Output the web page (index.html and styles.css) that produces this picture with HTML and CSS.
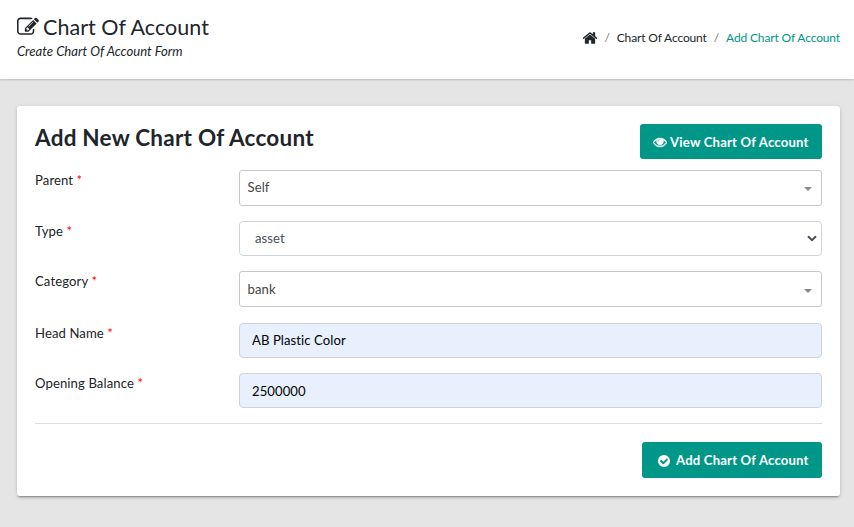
FILE: index.html
```html
<!DOCTYPE html>
<html lang="en">
<head>
<meta charset="utf-8">
<title>Chart Of Account</title>
<link rel="stylesheet" href="styles.css">
</head>
<body>
<header class="app-title">
  <div>
    <h1 class="page-title"><svg class="icon icon-edit" viewBox="0 0 1792 1792"><path d="M888 1184l116-116-152-152-116 116v56h96v96h56zm440-720q-16-16-33 1l-350 350q-17 17-1 33t33-1l350-350q17-17 1-33zm80 594v190q0 119-84.500 203.500t-203.500 84.500h-832q-119 0-203.500-84.500t-84.500-203.500v-832q0-119 84.500-203.500t203.500-84.500h832q63 0 117 25 15 7 18 23 3 17-9 29l-49 49q-14 14-32 8-23-6-45-6h-832q-66 0-113 47t-47 113v832q0 66 47 113t113 47h832q66 0 113-47t47-113v-126q0-13 9-22l64-64q15-15 35-7t20 29zm-96-738l288 288-672 672h-288v-288zm444 132l-92 92-288-288 92-92q28-28 68-28t68 28l152 152q28 28 28 68t-28 68z"/></svg><span>Chart Of Account</span></h1>
    <p class="subtitle">Create Chart Of Account Form</p>
  </div>
  <nav class="breadcrumb">
    <svg class="icon icon-home" viewBox="0 0 1792 1792"><path d="M1472 992v480q0 26-19 45t-45 19h-384v-384h-256v384h-384q-26 0-45-19t-19-45v-480q0-1 .5-3t.5-3l575-474 575 474q1 2 1 6zm223-69l-62 74q-8 9-21 11h-3q-13 0-21-7l-692-577-692 577q-12 8-24 7-13-2-21-11l-62-74q-8-10-7-23.500t11-21.500l719-599q32-26 76-26t76 26l244 204v-195q0-14 9-23t23-9h192q14 0 23 9t9 23v408l219 182q10 8 11 21.500t-7 23.500z"/></svg>
    <span class="sep">/</span>
    <span>Chart Of Account</span>
    <span class="sep">/</span>
    <a class="current">Add Chart Of Account</a>
  </nav>
</header>
<main class="tile">
  <div class="tile-head">
    <h2 class="tile-title">Add New Chart Of Account</h2>
    <a class="btn btn-view"><svg class="icon icon-eye" viewBox="0 0 1792 1792"><path d="M1664 960q-152-236-381-353 61 104 61 225 0 185-131.500 316.500t-316.500 131.500-316.500-131.500-131.500-316.500q0-121 61-225-229 117-381 353 133 205 333.500 326.500t434.500 121.500 434.500-121.500 333.500-326.500zm-720-384q0-20-14-34t-34-14q-125 0-214.500 89.500t-89.500 214.500q0 20 14 34t34 14 34-14 14-34q0-86 61-147t147-61q20 0 34-14t14-34zm848 384q0 34-20 69-140 230-376.500 368.500t-499.500 138.500-499.500-139-376.500-368q-20-35-20-69t20-69q140-229 376.500-368t499.500-139 499.500 139 376.500 368q20 35 20 69z"/></svg><span>View Chart Of Account</span></a>
  </div>
  <form class="form">
    <div class="row">
      <label class="label">Parent <span class="req">*</span></label>
      <div class="control picker picker-first"><span>Self</span><i class="caret"></i></div>
    </div>
    <div class="row">
      <label class="label">Type <span class="req">*</span></label>
      <div class="control select"><span>asset</span><svg class="chevron" viewBox="0 0 10 7"><path d="M1 1.200l4 4 4-4"/></svg></div>
    </div>
    <div class="row">
      <label class="label">Category <span class="req">*</span></label>
      <div class="control picker"><span>bank</span><i class="caret"></i></div>
    </div>
    <div class="row row-input">
      <label class="label">Head Name <span class="req">*</span></label>
      <div class="control filled filled-name">AB Plastic Color</div>
    </div>
    <div class="row">
      <label class="label">Opening Balance <span class="req">*</span></label>
      <div class="control filled">2500000</div>
    </div>
  </form>
  <div class="tile-footer">
    <a class="btn btn-add"><svg class="icon icon-check" viewBox="0 0 1792 1792"><path d="M1412 734q0-28-18-46l-91-90q-19-19-45-19t-45 19l-408 407-226-226q-19-19-45-19t-45 19l-91 90q-18 18-18 46 0 27 18 45l362 362q19 19 45 19 27 0 46-19l543-543q18-18 18-45zm252 162q0 209-103 385.500t-279.500 279.500-385.500 103-385.500-103-279.500-279.500-103-385.500 103-385.500 279.500-279.500 385.500-103 385.500 103 279.500 279.500 103 385.500z"/></svg><span>Add Chart Of Account</span></a>
  </div>
</main>
</body>
</html>
```
FILE: styles.css
```css
* { box-sizing: border-box; }
body {
  margin: 0;
  height: 527px;
  overflow: hidden;
  background: #e5e5e5;
  color: #212529;
  font-family: Lato, "Liberation Sans", sans-serif;
  font-size: 13.125px;
  line-height: 20px;
}
.icon { fill: currentColor; flex: none; }
.app-title {
  display: flex;
  justify-content: space-between;
  height: 79px;
  padding: 14px 14px 0 17px;
  background: #fff;
  box-shadow: 0 1px 2px rgba(0, 0, 0, .18);
}
.page-title {
  display: flex;
  align-items: center;
  gap: 4px;
  margin: 0;
  font-size: 21.500px;
  font-weight: 400;
  letter-spacing: .04px;
  line-height: 25px;
  height: 27px;
  padding-bottom: 1px;
}
.icon-edit { width: 22px; height: 22px; }
.subtitle { margin: 0; font-style: italic; }
.breadcrumb {
  display: flex;
  align-items: center;
  height: 20px;
  margin-top: 14px;
  font-size: 12px;
  letter-spacing: -.14px;
}
.icon-home { width: 16px; height: 16px; margin-right: -1px; }
.sep { margin: 0 7px; color: #6c757d; }
.current { color: #009688; }
.tile {
  width: 823px;
  height: 390px;
  margin: 27px 0 0 17px;
  padding: 18px;
  background: #fff;
  border-radius: 3px;
  box-shadow: 0 2px 2px 0 rgba(0, 0, 0, .14), 0 1px 5px 0 rgba(0, 0, 0, .12), 0 3px 1px -2px rgba(0, 0, 0, .2);
}
.tile-head {
  display: flex;
  justify-content: space-between;
  height: 46px;
}
.tile-title {
  margin: 0;
  font-size: 22.500px;
  font-weight: 700;
  letter-spacing: .24px;
  line-height: 27px;
}
.btn {
  display: flex;
  align-items: center;
  border-radius: 3px;
  background: #009688;
  color: #fff;
  font-weight: 700;
  letter-spacing: .19px;
}
.btn-view { width: 182px; height: 35px; padding-left: 13px; gap: 4px; }
.btn-add { width: 180px; height: 36px; padding-left: 15px; gap: 5px; }
.icon-eye { width: 14px; height: 14px; margin-right: -1px; stroke: currentColor; stroke-width: 50px; }
.icon-check { width: 14px; height: 14px; margin-top: 2px; }
.form { display: grid; gap: 15px; }
.row { display: grid; grid-template-columns: 204px 1fr; }
.row-input { margin-top: 1px; }
.label { letter-spacing: .1px; }
.control {
  display: flex;
  align-items: center;
  justify-content: space-between;
  height: 35px;
  border: 1px solid #ced4da;
  border-radius: 4px;
  color: #495057;
  letter-spacing: .07px;
}
.picker { height: 36px; padding: 0 9px 0 7.500px; border-color: #c8c8c8; border-radius: 3px; color: #444; }
.picker-first { padding-bottom: 2px; }
.select { padding: 0 4px 1px 15px; }
.filled { padding: 0 12px; background: #e8f0fe; color: #000; }
.filled-name { padding-bottom: 2px; }
.req { color: #f00; }
.caret {
  margin-top: 3px;
  border: 4px solid transparent;
  border-top: 4px solid #888;
  border-bottom: 0;
}
.chevron { width: 10px; height: 7px; fill: none; stroke: #495057; stroke-width: 2; }
.tile-footer {
  display: flex;
  justify-content: flex-end;
  margin-top: 15px;
  padding-top: 18px;
  border-top: 1px solid #ddd;
}
```
